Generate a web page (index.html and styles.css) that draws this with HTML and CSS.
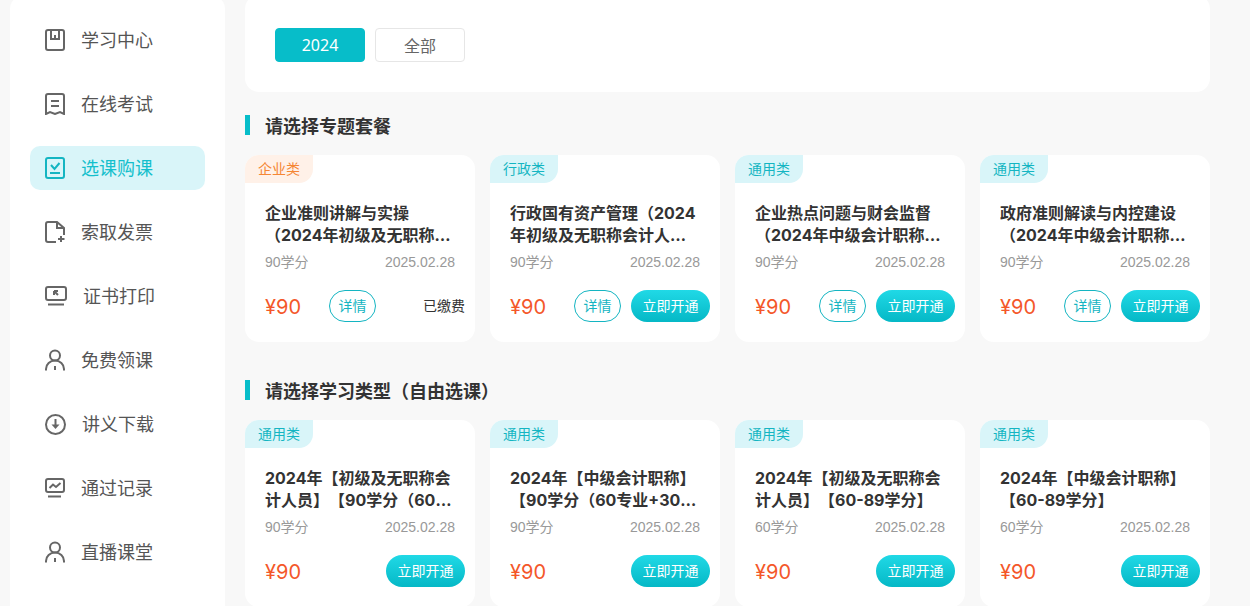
FILE: index.html
```html
<!DOCTYPE html>
<html lang="zh-CN">
<head>
    <meta charset="UTF-8">
    <meta name="viewport" content="width=device-width, initial-scale=1.0">
    <title>选课购课</title>
    <link rel="stylesheet" href="styles.css">
</head>
<body>
    <div class="page">
        <div class="sidebar">
            <a class="nav-item">
                <svg width="20" height="22" viewBox="0 0 20 22"><rect x="1" y="1" width="18" height="20" rx="2"/><path d="M6 1.5V10H14V1.5M10 6V10"/></svg>
                <span>学习中心</span>
            </a>
            <a class="nav-item">
                <svg width="20" height="22" viewBox="0 0 20 22"><path d="M3 1H17A2 2 0 0 1 19 3V21L15 19 10 21 5 19 1 21V3A2 2 0 0 1 3 1ZM6 8H14M6 13H14"/></svg>
                <span>在线考试</span>
            </a>
            <a class="nav-item active">
                <svg width="20" height="22" viewBox="0 0 20 22"><rect x="1" y="1" width="18" height="20" rx="2"/><path d="M6 8L9.5 12 14.5 6M5 16H15"/></svg>
                <span>选课购课</span>
            </a>
            <a class="nav-item">
                <svg width="20" height="22" viewBox="0 0 20 22"><path d="M11 21H3A2 2 0 0 1 1 19V3A2 2 0 0 1 3 1H12L19 7V14M12 1V7H19M16 15V21M13 18H19.5"/></svg>
                <span>索取发票</span>
            </a>
            <a class="nav-item">
                <svg width="22" height="20" viewBox="0 0 22 20"><rect x="1" y="1" width="20" height="13" rx="2"/><path d="M3 18.5H19M9 5H13M9 5V9M9 5L13 9"/></svg>
                <span>证书打印</span>
            </a>
            <a class="nav-item">
                <svg width="20" height="22" viewBox="0 0 20 22"><circle cx="10" cy="6.5" r="5"/><path d="M1 21.5V20A9 8.5 0 0 1 19 20V21.5M10 17V21"/></svg>
                <span>免费领课</span>
            </a>
            <a class="nav-item">
                <svg width="21" height="21" viewBox="0 0 21 21"><circle cx="10.5" cy="10.500" r="9.500"/><path d="M10.500 5V11"/><path class="solid" d="M6.500 10.500H14.500L10.500 15Z"/></svg>
                <span>讲义下载</span>
            </a>
            <a class="nav-item">
                <svg width="20" height="20" viewBox="0 0 20 20"><rect x="1" y="1" width="18" height="13" rx="2"/><path d="M4.500 10L8 6.500 11 9 15.500 5M3 18.500H16"/></svg>
                <span>通过记录</span>
            </a>
            <a class="nav-item">
                <svg width="20" height="22" viewBox="0 0 20 22"><circle cx="10" cy="6.5" r="5"/><path d="M1 21.500V20A9 8.500 0 0 1 19 20V21.500M10 17V21"/></svg>
                <span>直播课堂</span>
            </a>
        </div>

        <div class="main">
            <div class="filter-card">
                <button class="year-btn selected">2024</button>
                <button class="year-btn">全部</button>
            </div>

            <h2 class="section-title">请选择专题套餐</h2>
            <div class="card-grid">
                <div class="course-card">
                    <span class="tag orange">企业类</span>
                    <h3 class="course-title">企业准则讲解与实操（2024年初级及无职称会计人员）</h3>
                    <div class="course-meta"><span>90学分</span><span>2025.02.28</span></div>
                    <div class="course-foot">
                        <span class="price">¥90</span>
                        <div class="course-actions">
                            <button class="detail-btn">详情</button>
                            <span class="paid">已缴费</span>
                        </div>
                    </div>
                </div>
                <div class="course-card">
                    <span class="tag">行政类</span>
                    <h3 class="course-title">行政国有资产管理（2024年初级及无职称会计人员）</h3>
                    <div class="course-meta"><span>90学分</span><span>2025.02.28</span></div>
                    <div class="course-foot">
                        <span class="price">¥90</span>
                        <div class="course-actions">
                            <button class="detail-btn">详情</button>
                            <button class="open-btn">立即开通</button>
                        </div>
                    </div>
                </div>
                <div class="course-card">
                    <span class="tag">通用类</span>
                    <h3 class="course-title">企业热点问题与财会监督（2024年中级会计职称人员）</h3>
                    <div class="course-meta"><span>90学分</span><span>2025.02.28</span></div>
                    <div class="course-foot">
                        <span class="price">¥90</span>
                        <div class="course-actions">
                            <button class="detail-btn">详情</button>
                            <button class="open-btn">立即开通</button>
                        </div>
                    </div>
                </div>
                <div class="course-card">
                    <span class="tag">通用类</span>
                    <h3 class="course-title">政府准则解读与内控建设（2024年中级会计职称人员）</h3>
                    <div class="course-meta"><span>90学分</span><span>2025.02.28</span></div>
                    <div class="course-foot">
                        <span class="price">¥90</span>
                        <div class="course-actions">
                            <button class="detail-btn">详情</button>
                            <button class="open-btn">立即开通</button>
                        </div>
                    </div>
                </div>
            </div>

            <h2 class="section-title second">请选择学习类型（自由选课）</h2>
            <div class="card-grid">
                <div class="course-card">
                    <span class="tag">通用类</span>
                    <h3 class="course-title">2024年【初级及无职称会计人员】【90学分（60专业+30公需）】</h3>
                    <div class="course-meta"><span>90学分</span><span>2025.02.28</span></div>
                    <div class="course-foot">
                        <span class="price">¥90</span>
                        <button class="open-btn">立即开通</button>
                    </div>
                </div>
                <div class="course-card">
                    <span class="tag">通用类</span>
                    <h3 class="course-title">2024年【中级会计职称】【90学分（60专业+30公需）】</h3>
                    <div class="course-meta"><span>90学分</span><span>2025.02.28</span></div>
                    <div class="course-foot">
                        <span class="price">¥90</span>
                        <button class="open-btn">立即开通</button>
                    </div>
                </div>
                <div class="course-card">
                    <span class="tag">通用类</span>
                    <h3 class="course-title">2024年【初级及无职称会计人员】【60-89学分】</h3>
                    <div class="course-meta"><span>60学分</span><span>2025.02.28</span></div>
                    <div class="course-foot">
                        <span class="price">¥90</span>
                        <button class="open-btn">立即开通</button>
                    </div>
                </div>
                <div class="course-card">
                    <span class="tag">通用类</span>
                    <h3 class="course-title">2024年【中级会计职称】【60-89学分】</h3>
                    <div class="course-meta"><span>60学分</span><span>2025.02.28</span></div>
                    <div class="course-foot">
                        <span class="price">¥90</span>
                        <button class="open-btn">立即开通</button>
                    </div>
                </div>
            </div>
        </div>
    </div>
</body>
</html>
```

FILE: styles.css
```css
html, body {
    height: 100%;
    overflow: hidden;
}
body {
    margin: 0;
    background-color: #f8f8f8;
    font-family: "Noto Sans", "Noto Sans CJK SC", sans-serif;
    color: #333;
    text-spacing-trim: space-all;
}
button {
    font-family: inherit;
    cursor: pointer;
    padding: 0;
}
.page {
    display: flex;
    align-items: flex-start;
    margin-top: -5px;
    padding-left: 10px;
}
.sidebar {
    width: 175px;
    padding: 23px 20px 40px;
    background-color: white;
    border-radius: 14px;
    flex-shrink: 0;
}
.nav-item {
    display: flex;
    align-items: center;
    gap: 16px;
    height: 44px;
    padding-left: 15px;
    margin-bottom: 20px;
    border-radius: 10px;
    font-size: 18px;
    color: #555;
}
.nav-item span {
    margin-bottom: 2px;
}
.nav-item svg {
    fill: none;
    stroke: #666;
    stroke-width: 2;
    flex-shrink: 0;
}
.nav-item svg .solid {
    fill: #666;
    stroke: none;
}
.nav-item.active {
    background-color: #d9f5f9;
    color: #14bfcc;
}
.nav-item.active svg {
    stroke: #14b5c2;
}
.main {
    width: 965px;
    margin-left: 20px;
    flex-shrink: 0;
}
.filter-card {
    display: flex;
    gap: 10px;
    height: 64px;
    padding: 33px 30px 0;
    background-color: white;
    border-radius: 14px;
}
.year-btn {
    width: 90px;
    height: 34px;
    border: 1px solid #e6e6e6;
    border-radius: 4px;
    background-color: white;
    font-size: 16px;
    color: #666;
}
.year-btn.selected {
    border-color: #07bdc9;
    background-color: #07bdc9;
    color: white;
}
.section-title {
    height: 20px;
    margin: 23px 0 20px;
    padding-left: 15px;
    border-left: 5px solid #07bdc9;
    font-size: 18px;
    font-weight: bold;
    line-height: 22px;
    color: #333;
}
.section-title.second {
    margin-top: 38px;
}
.card-grid {
    display: grid;
    grid-template-columns: repeat(4, 230px);
    gap: 15px;
}
.course-card {
    height: 187px;
    background-color: white;
    border-radius: 14px;
    overflow: hidden;
}
.tag {
    display: block;
    width: 68px;
    height: 28px;
    border-bottom-right-radius: 14px;
    background-color: #d9f5f9;
    font-size: 14px;
    line-height: 28px;
    text-align: center;
    color: #14b5c2;
}
.tag.orange {
    background-color: #fff1e8;
    color: #f58634;
}
.course-title {
    display: -webkit-box;
    -webkit-box-orient: vertical;
    -webkit-line-clamp: 2;
    overflow: hidden;
    height: 44px;
    margin: 19px 20px 0;
    font-family: Inter, "Noto Sans CJK SC", sans-serif;
    font-size: 16px;
    font-weight: bold;
    line-height: 22px;
    color: #333;
}
.course-meta {
    display: flex;
    justify-content: space-between;
    margin: 6px 20px 0;
    font-family: "Liberation Sans", "Noto Sans CJK SC", sans-serif;
    font-size: 14px;
    line-height: 20px;
    color: #999;
}
.course-foot {
    display: flex;
    align-items: center;
    justify-content: space-between;
    height: 32px;
    margin-top: 18px;
    padding: 0 10px 0 20px;
}
.price {
    margin-top: 2px;
    font-family: Inter, sans-serif;
    font-size: 20px;
    color: #f4572a;
}
.course-actions {
    display: flex;
    align-items: center;
    gap: 10px;
}
.detail-btn {
    width: 47px;
    height: 32px;
    padding-bottom: 2px;
    border: 1px solid #14b5c2;
    border-radius: 16px;
    background-color: white;
    font-size: 14px;
    color: #14b5c2;
}
.open-btn {
    width: 79px;
    height: 32px;
    padding-bottom: 2px;
    border: none;
    border-radius: 16px;
    background: linear-gradient(180deg, #20d9e6, #05b8c6);
    font-size: 14px;
    color: white;
}
.paid {
    width: 79px;
    padding-bottom: 2px;
    font-size: 14px;
    text-align: right;
    color: #333;
}
```
